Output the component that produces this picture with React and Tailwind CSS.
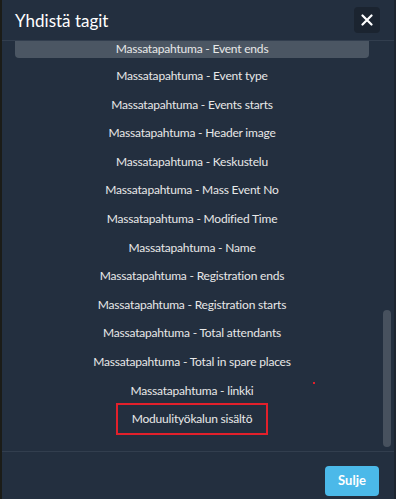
import React from 'react'

const tags = [
  'Massatapahtuma - Event type',
  'Massatapahtuma - Events starts',
  'Massatapahtuma - Header image',
  'Massatapahtuma - Keskustelu',
  'Massatapahtuma - Mass Event No',
  'Massatapahtuma - Modified Time',
  'Massatapahtuma - Name',
  'Massatapahtuma - Registration ends',
  'Massatapahtuma - Registration starts',
  'Massatapahtuma - Total attendants',
  'Massatapahtuma - Total in spare places',
  'Massatapahtuma - linkki',
]

const App = () => {
  return (
    <div className="w-[396px] h-[499px] bg-[#1b1c18] flex overflow-hidden" style={{ fontFamily: 'Lato, "Open Sans", sans-serif' }}>
      <div className="ml-[2px] w-[392px] h-full bg-[#232f3f] flex flex-col">
        {/* header */}
        <div className="h-[41px] shrink-0 flex items-center justify-between pl-[13px] pr-[14px] border-b border-[#323e4e]">
          <h2 className="text-[17px] text-white leading-none">Yhdistä tagit</h2>
          <button className="w-[26px] h-[26px] rounded bg-[#1b2430] flex items-center justify-center">
            <svg width="12" height="12" viewBox="0 0 12 12">
              <path d="M1.5 1.5 L10.5 10.5 M10.5 1.5 L1.5 10.5" stroke="#fff" strokeWidth="2.2" strokeLinecap="round" />
            </svg>
          </button>
        </div>

        {/* body */}
        <div className="relative h-[410px] shrink-0 overflow-hidden text-[12px] tracking-[-0.2px] text-[#e8e8e8]">
          <div className="flex flex-col pl-[13px] pr-[25px]">
            <div className="h-[17px] mb-[7.6px] pb-[3px] flex items-center justify-center leading-[13px] rounded-b-sm bg-[#4b5663]">
              Massatapahtuma - Event ends
            </div>
            {tags.map((t) => (
              <div key={t} className="h-[21px] mb-[7.6px] flex items-center justify-center">
                {t}
              </div>
            ))}
            <div className="flex justify-center">
              <div className="w-[152px] h-[32px] mt-[-5.5px] border-2 border-[#e2202b] flex items-center justify-center">
                Moduulityökalun sisältö
              </div>
            </div>
          </div>
          <div className="absolute left-[311px] top-[341px] w-[2px] h-[2px] bg-[#e2202b]" />
          <div className="absolute left-[381px] top-[269px] w-[8px] h-[137px] rounded-full bg-[#47515e]" />
        </div>

        {/* footer */}
        <div className="flex-1 border-t border-[#323e4e] flex items-start justify-end pt-[14px] pr-[15px]">
          <button className="w-[54px] h-[30px] rounded bg-[#4bb9e9] text-white font-bold text-[13px]">Sulje</button>
        </div>
      </div>
      <div className="w-[2px] h-full bg-[#1d2530]" />
    </div>
  )
}

export default App
